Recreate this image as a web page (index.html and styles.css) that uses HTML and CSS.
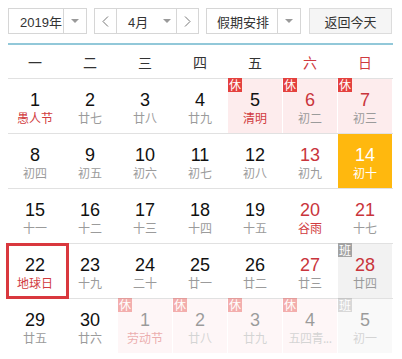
FILE: index.html
```html
<!DOCTYPE html>
<html lang="zh-CN">
<head>
<meta charset="utf-8">
<title>万年历</title>
<link rel="stylesheet" href="styles.css">
</head>
<body>
<div class="cal">
  <div class="toolbar">
    <div class="sel year">
      <span class="val">2019年</span>
      <span class="dd"><i class="tri"></i></span>
    </div>
    <div class="sel month">
      <span class="nav"><svg width="7" height="11" viewBox="0 0 7 11"><polyline points="6,0.5 1,5.5 6,10.5" fill="none" stroke="#777" stroke-width="1"/></svg></span>
      <span class="val mid">4月<i class="tri"></i></span>
      <span class="nav"><svg width="7" height="11" viewBox="0 0 7 11"><polyline points="1,0.5 6,5.5 1,10.5" fill="none" stroke="#777" stroke-width="1"/></svg></span>
    </div>
    <div class="sel hol">
      <span class="val">假期安排</span>
      <span class="dd"><i class="tri"></i></span>
    </div>
    <button class="today">返回今天</button>
  </div>

  <div class="week">
    <span>一</span><span>二</span><span>三</span><span>四</span><span>五</span><span class="we">六</span><span class="we">日</span>
  </div>

  <div class="row">
    <div class="cell"><b>1</b><em class="fest">愚人节</em></div>
    <div class="cell"><b>2</b><em>廿七</em></div>
    <div class="cell"><b>3</b><em>廿八</em></div>
    <div class="cell"><b>4</b><em>廿九</em></div>
    <div class="cell rest"><i class="badge">休</i><b>5</b><em class="fest">清明</em></div>
    <div class="cell rest red"><i class="badge">休</i><b>6</b><em>初二</em></div>
    <div class="cell rest red"><i class="badge">休</i><b>7</b><em>初三</em></div>
  </div>

  <div class="row">
    <div class="cell"><b>8</b><em>初四</em></div>
    <div class="cell"><b>9</b><em>初五</em></div>
    <div class="cell"><b>10</b><em>初六</em></div>
    <div class="cell"><b>11</b><em>初七</em></div>
    <div class="cell"><b>12</b><em>初八</em></div>
    <div class="cell red"><b>13</b><em>初九</em></div>
    <div class="cell sel-day"><b>14</b><em>初十</em></div>
  </div>

  <div class="row">
    <div class="cell"><b>15</b><em>十一</em></div>
    <div class="cell"><b>16</b><em>十二</em></div>
    <div class="cell"><b>17</b><em>十三</em></div>
    <div class="cell"><b>18</b><em>十四</em></div>
    <div class="cell"><b>19</b><em>十五</em></div>
    <div class="cell red"><b>20</b><em class="fest">谷雨</em></div>
    <div class="cell red"><b>21</b><em>十七</em></div>
  </div>

  <div class="row">
    <div class="cell mark"><b>22</b><em class="fest">地球日</em></div>
    <div class="cell"><b>23</b><em>十九</em></div>
    <div class="cell"><b>24</b><em>二十</em></div>
    <div class="cell"><b>25</b><em>廿一</em></div>
    <div class="cell"><b>26</b><em>廿二</em></div>
    <div class="cell red"><b>27</b><em>廿三</em></div>
    <div class="cell work red"><i class="badge">班</i><b>28</b><em>廿四</em></div>
  </div>

  <div class="row last">
    <div class="cell"><b>29</b><em>廿五</em></div>
    <div class="cell"><b>30</b><em>廿六</em></div>
    <div class="cell rest other"><i class="badge">休</i><b>1</b><em class="fest">劳动节</em></div>
    <div class="cell rest other"><i class="badge">休</i><b>2</b><em>廿八</em></div>
    <div class="cell rest other"><i class="badge">休</i><b>3</b><em>廿九</em></div>
    <div class="cell rest other"><i class="badge">休</i><b>4</b><em class="short">五四青...</em></div>
    <div class="cell work other"><i class="badge">班</i><b>5</b><em>初一</em></div>
  </div>
</div>
</body>
</html>
```

FILE: styles.css
```css
* { box-sizing: border-box; }

body {
  margin: 0;
  background: #fff;
  font-family: "Liberation Sans", Arial, "Noto Sans CJK SC", sans-serif;
  color: #333;
}

.cal {
  width: 401px;
  padding: 8px 8px 0 8px;
}

/* toolbar */
.toolbar {
  display: flex;
  height: 26px;
  gap: 7px;
}

.sel {
  display: flex;
  height: 26px;
  border: 1px solid #d6d6d6;
  background: #fff;
  font-size: 13px;
  color: #333;
}

.val {
  display: flex;
  align-items: center;
}

.year .val { width: 54px; padding-left: 11px; }
.hol .val { width: 70px; padding-left: 10px; }

.dd {
  width: 23px;
  border-left: 1px solid #d6d6d6;
  display: flex;
  align-items: center;
  justify-content: center;
}

.tri {
  display: block;
  width: 0;
  height: 0;
  border-left: 4px solid transparent;
  border-right: 4px solid transparent;
  border-top: 4px solid #9a9a9a;
}

.month .nav {
  width: 21px;
  display: flex;
  align-items: center;
  justify-content: center;
}

.month .mid {
  width: 61px;
  border-left: 1px solid #d6d6d6;
  border-right: 1px solid #d6d6d6;
  padding-left: 11px;
}

.month .mid .tri { margin-left: 15px; }

.today {
  margin-left: 1px;
  width: 83px;
  height: 26px;
  border: 1px solid #dcdcdc;
  background: #f5f5f5;
  font-family: "Liberation Sans", "Noto Sans CJK SC", sans-serif;
  font-size: 13px;
  color: #333;
  padding: 0;
}

/* week header */
.week {
  margin-top: 9px;
  border-top: 2px solid #92c8d9;
  border-bottom: 1px solid #e1e1e1;
  height: 36px;
  display: grid;
  grid-template-columns: repeat(7, 54px);
  column-gap: 1px;
  align-items: center;
  font-family: "Noto Sans CJK SC", sans-serif;
  font-size: 14px;
  color: #333;
}

.week span { text-align: center; }
.week .we { color: #cf3a3f; }

/* rows */
.row {
  display: grid;
  grid-template-columns: repeat(7, 54px);
  column-gap: 1px;
  height: 55px;
  border-bottom: 1px solid #e1e1e1;
}

.row.last { border-bottom: none; }

.cell {
  position: relative;
  height: 54px;
  padding-top: 11px;
  text-align: center;
}

.cell b {
  display: block;
  font-weight: normal;
  font-size: 18px;
  line-height: 20px;
  color: #111;
}

.cell em {
  display: block;
  font-style: normal;
  font-family: "Noto Sans CJK SC", sans-serif;
  font-size: 12px;
  line-height: 16px;
  color: #9b9b9b;
  white-space: nowrap;
}

.cell em.short { letter-spacing: -0.5px; }

.cell em.fest { color: #d13b40; }

.red b { color: #c9353c; }

.rest { background: #fdeced; }
.work { background: #f2f2f2; }

.badge {
  position: absolute;
  top: -1px;
  left: 0;
  width: 14px;
  height: 14px;
  font-style: normal;
  font-family: "Noto Sans CJK SC", sans-serif;
  font-size: 12px;
  line-height: 14px;
  color: #fff;
  background: #e4413e;
  text-align: center;
}

.work .badge { background: #a3a3a3; }

.sel-day { background: #ffb80e; }
.sel-day b, .sel-day em { color: #fff; }

.other { opacity: 0.42; }

.mark::after {
  content: "";
  position: absolute;
  top: -1px;
  bottom: -1px;
  left: -2px;
  right: -7px;
  border: 3px solid #d9383e;
}
```
